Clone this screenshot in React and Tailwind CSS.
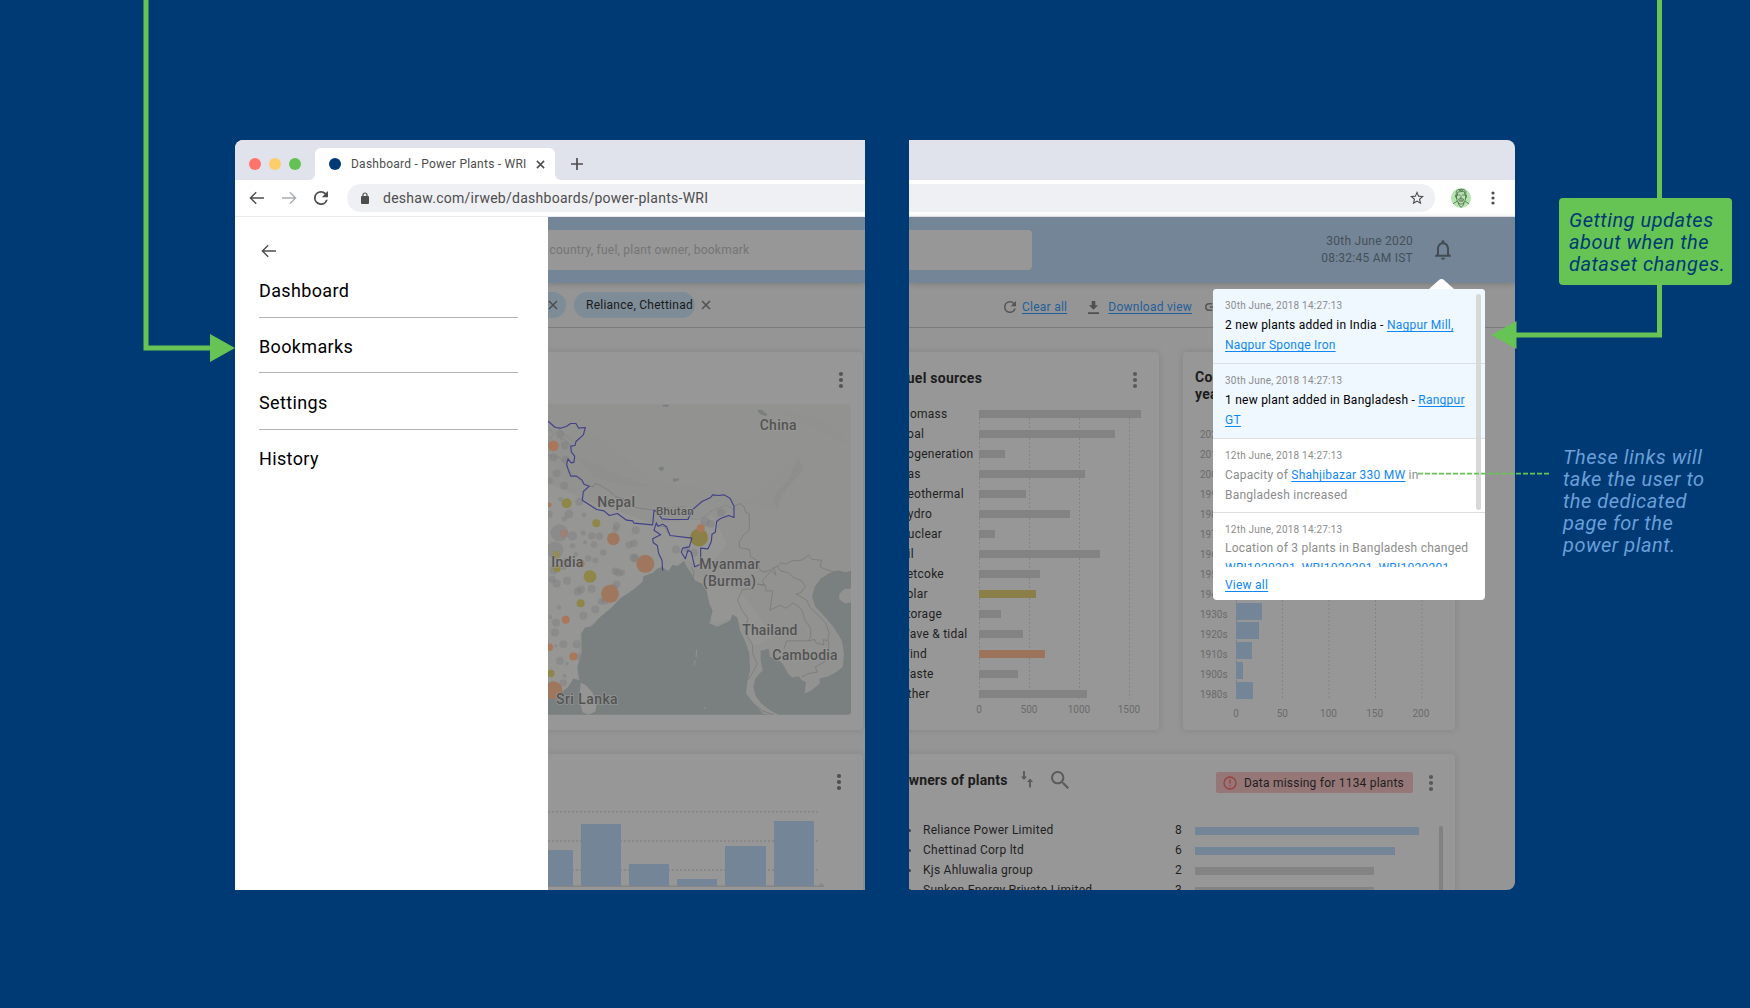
import React from "react";

const FUELS = [
  ["Biomass", 162, "bg-[#838383]"],
  ["Coal", 136, "bg-[#838383]"],
  ["Cogeneration", 26, "bg-[#838383]"],
  ["Gas", 106, "bg-[#838383]"],
  ["Geothermal", 47, "bg-[#838383]"],
  ["Hydro", 91, "bg-[#838383]"],
  ["Nuclear", 16, "bg-[#838383]"],
  ["Oil", 121, "bg-[#838383]"],
  ["Petcoke", 61, "bg-[#838383]"],
  ["Solar", 57, "bg-[#8a7f48]"],
  ["Storage", 22, "bg-[#838383]"],
  ["Wave & tidal", 44, "bg-[#838383]"],
  ["Wind", 66, "bg-[#9b745b]"],
  ["Waste", 39, "bg-[#838383]"],
  ["Other", 108, "bg-[#838383]"],
];

const DECADES = [
  ["2020s", 60], ["2010s", 150], ["2000s", 180], ["1990s", 120], ["1980s", 140],
  ["1970s", 100], ["1960s", 90], ["1950s", 70], ["1940s", 41], ["1930s", 26],
  ["1920s", 23], ["1910s", 16], ["1900s", 7], ["1980s", 17],
];

const OWNERS = [
  ["Reliance Power Limited", 8, 224, "bg-[#738596]"],
  ["Chettinad Corp ltd", 6, 200, "bg-[#738596]"],
  ["Kjs Ahluwalia group", 2, 179, "bg-[#838383]"],
  ["Sunkon Energy Private Limited", 3, 179, "bg-[#838383]"],
];

const CARD = "rounded bg-[#979797] shadow-[0_0_7px_rgba(0,0,0,0.12)]";

function Dots({ className = "", small = false }) {
  const r = small ? 1.6 : 2.1;
  const s = small ? 5 : 6;
  return (
    <svg className={className} width="6" height="18" viewBox="0 0 6 18" fill="currentColor">
      <circle cx="3" cy={9 - s} r={r} />
      <circle cx="3" cy="9" r={r} />
      <circle cx="3" cy={9 + s} r={r} />
    </svg>
  );
}

function Arrow({ flip = false, className = "" }) {
  return (
    <svg className={className} width="16" height="16" viewBox="0 0 16 16" fill="none" stroke="currentColor" strokeWidth="1.4">
      <path d={flip ? "M1 8H14.3M8.8 2.2L14.6 8L8.8 13.8" : "M15 8H1.7M7.2 2.2L1.4 8L7.2 13.8"} />
    </svg>
  );
}

function Cross({ size = 10, w = 1.5, className = "" }) {
  return (
    <svg className={className} width={size} height={size} viewBox="0 0 10 10" stroke="currentColor" strokeWidth={w}>
      <path d="M1 1L9 9M9 1L1 9" />
    </svg>
  );
}

function Reload({ size, className = "" }) {
  return (
    <svg className={className} width={size} height={size} viewBox="4 4 16 16" fill="currentColor">
      <path d="M17.65 6.35A7.96 7.96 0 0 0 12 4a8 8 0 1 0 7.73 10h-2.08A6 6 0 1 1 12 6c1.66 0 3.14.69 4.22 1.78L13 11h7V4z" />
    </svg>
  );
}

function TabStrip() {
  return (
    <div className="flex h-10 shrink-0 bg-white">
      <div className="flex w-20 items-center gap-2 rounded-tl-lg rounded-br-md bg-[#e0e3eb] pt-2 pl-[14px]">
        <span className="size-3 rounded-full bg-[#ff736a]" />
        <span className="size-3 rounded-full bg-[#fecd6b]" />
        <span className="size-3 rounded-full bg-[#64c254]" />
      </div>
      <div className="w-60 bg-[#e0e3eb] pt-2">
        <div className="flex h-8 items-center rounded-t-md bg-white pl-[14px] text-[#4d4d4d]">
          <span className="size-3 rounded-full bg-[#003a75]" />
          <span className="ml-[10px] w-[180px] text-xs tracking-[0.24px] whitespace-nowrap">Dashboard - Power Plants - WRI</span>
          <Cross size={9} w={1.7} className="ml-[5px]" />
        </div>
      </div>
      <div className="flex flex-1 items-center rounded-bl-md bg-[#e0e3eb] pt-2 pl-4 text-[#4d4d4d]">
        <svg width="12" height="12" viewBox="0 0 12 12" stroke="currentColor" strokeWidth="1.7">
          <path d="M6 0V12M0 6H12" />
        </svg>
      </div>
    </div>
  );
}

function Drawer() {
  return (
    <nav className="w-[313px] shrink-0 bg-white pl-6 text-black">
      <Arrow className="mt-[26px] ml-[2px] text-[#4d4d4d]" />
      <ul className="mt-[18px] w-[259px] text-lg leading-[28px] tracking-[0.36px]">
        <li className="h-[41px] border-b border-[#b2b2b2]">Dashboard</li>
        <li className="mt-[15px] h-10 border-b border-[#b2b2b2]">Bookmarks</li>
        <li className="mt-4 h-[41px] border-b border-[#b2b2b2]">Settings</li>
        <li className="mt-[15px] h-10">History</li>
      </ul>
    </nav>
  );
}

const GREY_DOTS = [
  [60,192,12],[75,225,12],[40,262,12],[76,268,11],[50,309,12],[73,347,12],[28,332,10],[118,395,12],[62,387,7],[87,432,13],[73,446,8],[132,434,7],[28,432,10],
  [58,488,26],[45,540,25],[97,497,14],[130,488,8],[155,497,11],[178,498,11],[162,523,10],[98,527,8],[230,467,11],[226,478,9],[287,480,12],[282,519,11],[268,524,11],[108,552,7],[145,565,10],[166,570,9],[190,547,10],
  [40,601,12],[70,588,11],[226,603,11],[235,607,12],[37,628,11],[50,640,12],[81,632,12],[123,658,12],[113,664,12],[155,656,12],[220,652,11],[230,643,11],[246,608,9],[285,564,12],[281,563,13],[195,690,13],[183,694,10],[166,718,12],[57,712,7],[130,737,12],[48,758,12],[31,741,6],[45,787,12],[70,822,12],[47,827,5],[110,822,12],[60,872,12],[81,880,5],[116,859,10],[73,917,6],[70,938,11],[80,575,12],[135,516,6],
  [543,427,12],[495,455,14],[512,461,12],[408,538,12],[462,548,12],[440,538,9],
];
const COLOR_DOTS = [
  [40,227,16,"#a9775a"],[28,404,7,"#a9775a"],[72,489,12,"#9c8175"],[220,506,19,"#9f775f"],[122,580,12,"#a9775a"],[316,581,27,"#9f775f"],[210,671,27,"#9f775f"],[77,749,12,"#a9775a"],[28,831,11,"#a9775a"],[100,859,12,"#a9775a"],[40,960,27,"#9f775f"],
  [80,399,15,"#8f8747"],[169,459,12,"#8f8747"],[48,554,12,"#928b5c"],[51,595,11,"#8f8747"],[150,619,19,"#8f8747"],[122,699,12,"#8f8747"],[33,910,11,"#8f8747"],[477,502,27,"#8b8147"],[482,474,12,"#a9775a"],
];
const MAP_LABELS = [
  ["China", 659, 181, 111, 42], ["Nepal", 172, 412, 113, 42], ["Bhutan", 348, 435, 113, 35], ["India", 34, 592, 96, 42],
  ["Myanmar", 478, 598, 182, 42], ["(Burma)", 488, 647, 160, 42], ["Thailand", 607, 794, 165, 42], ["Cambodia", 697, 869, 196, 42], ["Sri Lanka", 48, 1002, 185, 42],
];

function PlantMap() {
  return (
    <svg className="block h-[311px] w-[303px] rounded-r" viewBox="24 102 909 932">
      <rect x="24" y="102" width="909" height="932" fill="#929291" />
      <g fill="#8d8d8c">
        <path d="M24 220L130 170L240 250L330 330L520 360L620 400L700 330L770 250L790 300L740 360L700 420L600 390L450 400L330 410L220 370L120 330L70 320Z" opacity=".3" />
        <path d="M775 262L790 300L760 330L725 370L712 420L700 380L745 330Z" opacity=".8" />
        <path d="M110 260L230 310L330 350L270 350L160 320Z" opacity=".5" />
        <path d="M715 120L850 150L930 220L900 210L800 160Z" opacity=".3" />
      </g>
      <g fill="#989896">
        <path d="M24 340L140 390L340 460L520 440L560 520L500 600L440 570L380 600L300 640L180 740L120 790L110 940L24 990Z" opacity=".7" />
        <path d="M470 620L600 660L700 800L640 830L590 740L520 760Z" opacity=".5" />
      </g>
      <path fill="#7a8080" d="M24 1034V985L60 970L85 950L100 925L118 930L112 890L125 850L124 790L135 772L155 768L170 752L183 738L215 712L240 685L285 655L308 635L310 618L338 608L352 596L366 590L385 603L398 584L412 588L432 572L441 592L452 606L466 632L486 640L500 662L508 700L518 722L508 760L532 770L552 760L570 752L578 732L592 742L600 780L616 815L628 850L630 900L622 935L618 970L634 990L652 1010L668 1030L690 1034Z" />
      <path fill="#959594" d="M122 938L138 945L158 968L170 1000L166 1024L146 1034L128 1026L118 990Z" />
      <path fill="#7a8080" d="M662 842L686 836L690 860L712 868L728 880L744 910L756 922L776 918L786 930L798 936L794 970L812 962L840 940L838 925L866 918L890 905L908 890L912 850L905 810L880 770L850 735L826 710L816 680L824 650L842 625L866 610L894 600L916 606L933 602V1034H715L690 1020L664 1000L648 980L640 950L646 925L668 900L662 870Z" />
      <path fill="#929291" d="M897 672L914 656L933 656V696L916 700L898 688Z" />
      <path fill="#7a8080" d="M652 120L664 118L682 132L678 138L660 132ZM366 104H388L384 110L370 110ZM354 294L366 288L374 296L364 304ZM398 326L418 324L414 332L400 335Z" />
      <path stroke="#929291" strokeWidth="3" fill="none" d="M470 838L468 862M465 870L463 884M493 1010L496 1016" />
      <g fill="none" stroke="#757574" strokeWidth="2">
        <path strokeDasharray="4 4" d="M24 172L42 190L30 205M95 230L75 208L58 205M24 255L60 262L85 300L120 330M50 170L70 190L100 215M365 415L440 408M455 447L480 448L520 420L560 405L583 420" />
        <path d="M148 348L160 350L165 340L180 345L205 360L225 378L260 390L285 412L305 415L340 420M345 465L375 470L385 490" />
        <path d="M583 408L600 400L612 410L618 428L628 430V480L610 495L598 515V532L628 538L632 560L650 570L660 600L672 606L690 600L712 588L722 578L738 582L755 572L785 570L806 555L816 568L845 570L840 590L858 598L885 606" />
        <path d="M712 588L722 602L745 608L760 622L785 632L796 650L782 668L768 672L800 690L810 712L835 735L858 760L868 790L862 812L850 808L852 824L828 818L824 808L806 812L740 812L732 836M700 590L708 615L695 602L668 630L672 645L652 642L676 645L678 662H698L690 720L720 705L738 714L760 698L785 718L795 750L812 775V800L806 812M642 656L608 658L592 690L606 720L624 745L615 785L638 825V850L652 882L624 930M866 812V866L845 880L826 890L832 906L806 910L785 920" />
        <path d="M455 590L462 610L456 632M700 1034L668 1022L652 1008" />
      </g>
      <g>{GREY_DOTS.map(([x, y, r], i) => <circle key={i} cx={x} cy={y} r={r} fill="#808081" fillOpacity=".5" />)}</g>
      <g>{COLOR_DOTS.map(([x, y, r, c], i) => <circle key={i} cx={x} cy={y} r={r} fill={c} />)}</g>
      <path fill="none" stroke="#41418a" strokeWidth="3.4" strokeLinejoin="round" d="M24 153L46 172L62 174L80 168L92 160H108L116 174L136 172L130 194L108 214L105 226L92 228L94 245L104 258L102 276L94 278L84 266L80 282L84 296L92 318H110L126 330L132 342L148 348L130 364L127 390L170 418L192 422L208 436L232 430L260 450L278 452L282 459L338 464L342 420L350 424L366 446L390 448H444L456 420L486 394L512 382L518 374L536 376L552 374L570 384L582 408V442L566 436L540 446L530 454L526 486L516 492L514 514L504 536L482 534V582L464 590L454 546L444 540L436 566L424 546L428 534L448 530L456 504L390 496L380 470L368 462L354 468L349 458L342 480L362 494L338 506L340 518L352 526L356 550L366 570L368 602" />
      <g fontFamily="Roboto" fontWeight="500" fill="#535353" stroke="#9a9a99" strokeWidth="5" strokeOpacity=".75" paintOrder="stroke">
        {MAP_LABELS.map(([t, x, y, w, s]) => (
          <text key={t} x={x} y={y} textLength={w} fontSize={s}>{t}</text>
        ))}
      </g>
    </svg>
  );
}

function LeftColumn() {
  const bars = [["w-[25px]", "h-9"], ["w-10", "h-[62px]"], ["w-10", "h-[22px]"], ["w-10", "h-[7px]"], ["w-[41px]", "h-10"], ["w-10", "h-[65px]"]];
  return (
    <div className="flex w-[317px] flex-col overflow-hidden bg-[#959595]">
      <div className="flex h-[66px] shrink-0 items-center bg-[#738596] shadow-[0_1px_6px_rgba(0,0,0,0.18)]">
        <div className="flex h-10 w-full items-center bg-[#979797] text-xs tracking-[0.24px] whitespace-nowrap text-[#757575]">
          <span className="pl-[1.5px]">country, fuel, plant owner, bookmark</span>
        </div>
      </div>
      <div className="flex h-[45px] shrink-0 items-center border-b border-[#7b7b7b] text-xs">
        <div className="flex h-[26px] w-[18px] items-center rounded-r-full bg-[#7d8c97] text-[#4d4d4d]"><Cross /></div>
        <div className="ml-2 flex h-[26px] w-[121px] items-center rounded-full bg-[#7d8c97] pl-3 tracking-[0.25px] whitespace-nowrap text-[#1a1a1a]">Reliance, Chettinad</div>
        <Cross className="ml-[6px] text-[#505050]" />
      </div>
      <div className={`mt-6 mr-[2px] h-[378px] shrink-0 rounded-l-none ${CARD}`}>
        <div className="flex h-[52px] justify-end pt-[19px] pr-[19px] text-[#555]"><Dots /></div>
        <PlantMap />
      </div>
      <div className={`mt-6 mr-[2px] h-[160px] shrink-0 rounded-l-none ${CARD}`}>
        <div className="flex h-[57px] justify-end pt-[19px] pr-[21px] text-[#4f4f4f]"><Dots /></div>
        <div className="relative h-[76px] w-[277px]">
          <svg className="absolute inset-0" width="277" height="76" fill="none" stroke="#858585" strokeWidth="1.5">
            <path strokeDasharray="2 2" d="M0 .8H272M0 30H272M0 59H272" />
            <path d="M0 75.3H273" strokeWidth="1.5" />
            <path d="M272 72L277 75L272 78" fill="#858585" stroke="none" />
          </svg>
          <div className="relative flex h-[75px] items-end gap-2">
            {bars.map(([w, h], i) => <div key={i} className={`bg-[#738596] ${w} ${h}`} />)}
          </div>
        </div>
      </div>
    </div>
  );
}

function LeftWindow() {
  return (
    <section className="flex w-[630px] flex-col overflow-hidden rounded-tl-lg">
      <TabStrip />
      <div className="flex h-[37px] shrink-0 items-center border-b border-[#e9eaed] bg-white pl-[14px] text-[#4d4d4d]">
        <Arrow />
        <Arrow flip className="ml-4 text-[#aaadb5]" />
        <Reload size={14} className="ml-[17px]" />
        <div className="ml-[19px] flex h-7 flex-1 items-center rounded-l-full bg-[#eff0f4] pl-[14px]">
          <svg width="8" height="12" viewBox="0 0 8 12"><rect y="4" width="8" height="8" rx="1" fill="currentColor" /><path d="M2 5V3a2 2 0 0 1 4 0V5" fill="none" stroke="currentColor" strokeWidth="1.2" /></svg>
          <span className="ml-[14px] text-sm tracking-[0.27px]">deshaw.com/irweb/dashboards/power-plants-WRI</span>
        </div>
      </div>
      <div className="flex min-h-0 flex-1 overflow-hidden">
        <Drawer />
        <LeftColumn />
      </div>
    </section>
  );
}

function Avatar() {
  return (
    <svg className="ml-4" width="20" height="20" viewBox="0 0 20 20" fill="none" stroke="#3f5a3f" strokeWidth=".7">
      <circle cx="10" cy="10" r="10" fill="#b4e3ad" stroke="none" />
      <path d="M5.3 8V4.5C5 2.5 7 1.2 10 1.4C13 1 15.3 2.5 14.8 5V8.5L14 13L11.5 16H8.7L6.2 13ZM6.3 8L6.8 4.2L9 3.6H13.4L14 8M7.4 7H9.2M11 7H13M10 7.5V10H9.4M7.6 11.2L9.8 10.4L12.6 11.2L12 13.2H8.4ZM9 12H11.4M6.3 13.3L3 15L2 16M13.8 13.3L17 15L18 16.2M7 14L8 17L10 19.4L12.3 17L13.2 14.4M8 2.4L12.2 2.2M5.3 8.2L4.8 7V9.6L6 10.4M14.8 8L15.3 7.3V9.6L14.3 10.4" />
    </svg>
  );
}

function FuelCard() {
  return (
    <div className={`-ml-[22px] h-[378px] w-[272px] shrink-0 pl-3 ${CARD}`}>
      <div className="flex h-[52px] items-center justify-between pr-[21px]">
        <h2 className="text-sm font-bold tracking-[0.25px] text-[#1c1c1c]">Fuel sources</h2>
        <Dots className="mt-1 text-[#5a5a5a]" />
      </div>
      <div className="relative h-[300px]">
        <svg className="absolute top-[6px] left-[80px]" width="151" height="289" stroke="#848484" strokeDasharray="2 2">
          <path d="M.5 0V289M50.5 0V289M100.5 0V289M150.5 0V289" />
        </svg>
        <ul className="relative text-xs tracking-[0.25px] text-[#1f1f1f]">
          {FUELS.map(([n, w, c]) => (
            <li key={n} className="flex h-5 items-center">
              <span className="w-20 whitespace-nowrap">{n}</span>
              <span className={`h-2 ${c}`} style={{ width: w }} />
            </li>
          ))}
        </ul>
      </div>
      <div className="-mt-[1px] ml-[55px] flex text-center text-[10px] leading-[14px] text-[#6b6b6b]">
        {["0", "500", "1000", "1500"].map((n) => <span key={n} className="w-[50px]">{n}</span>)}
      </div>
    </div>
  );
}

function YearCard() {
  return (
    <div className={`h-[378px] w-[272px] shrink-0 pl-3 ${CARD}`}>
      <h2 className="h-[72px] pt-[17px] text-sm leading-[17px] font-bold tracking-[0.25px] text-[#1c1c1c]">Commissioning<br />year</h2>
      <div className="relative flex h-[280px] text-[10px] text-[#6b6b6b]">
        <ul className="w-[41px] pl-[5px]">
          {DECADES.map(([n], i) => <li key={i} className="flex h-5 items-center">{n}</li>)}
        </ul>
        <div className="relative">
          <svg className="absolute top-0 left-0" width="188" height="276" stroke="#848484" strokeDasharray="2 2">
            <path d="M.5 0V276M46.5 0V276M93 0V276M139.5 0V276M186 0V276" />
          </svg>
          <ul className="relative flex h-[275px] flex-col justify-between">
            {DECADES.map(([, w], i) => <li key={i} className="h-[17px] bg-[#738596]" style={{ width: w }} />)}
          </ul>
        </div>
      </div>
      <div className="ml-[18px] flex pt-[3px] text-center text-[10px] leading-[14px] text-[#6b6b6b]">
        {["0", "50", "100", "150", "200"].map((n) => <span key={n} className="w-[46.2px]">{n}</span>)}
      </div>
    </div>
  );
}

function OwnersCard() {
  return (
    <div className={`mt-6 -ml-[22px] h-[170px] w-[568px] shrink-0 pl-3 ${CARD}`}>
      <div className="flex h-[57px] items-center">
        <h2 className="-mt-[6px] w-[122px] shrink-0 text-sm font-bold tracking-[0.13px] whitespace-nowrap text-[#1c1c1c]">Owners of plants</h2>
        <svg className="-mt-[6px] shrink-0" width="12" height="17" viewBox="0 0 12 17" fill="#595959">
          <path d="M2.100 0H3.900V5.500H6L3 9L0 5.500H2.100ZM8.100 16.500H9.900V11H12L9 7.500L6 11H8.100Z" />
        </svg>
        <svg className="-mt-[5px] ml-[18px] shrink-0" width="18" height="18" viewBox="3 3 17.5 17.5" fill="#5a5a5a">
          <path d="M15.5 14h-.79l-.28-.27A6.47 6.47 0 0 0 16 9.5 6.5 6.5 0 1 0 9.5 16c1.61 0 3.09-.59 4.23-1.57l.27.28v.79l5 4.99L20.49 19l-4.99-5zm-6 0C7.01 14 5 11.99 5 9.5S7.01 5 9.5 5 14 7.01 14 9.5 11.99 14 9.5 14z" />
        </svg>
        <div className="ml-[147px] flex h-[21px] w-[197px] shrink-0 items-center rounded-xs bg-[#967777] pl-[7px] text-xs tracking-[0.22px] whitespace-nowrap text-[#1f1f1f]">
          <svg width="14" height="14" viewBox="0 0 14 14" fill="none" stroke="#9a3f3f" strokeWidth="1.3"><circle cx="7" cy="7" r="6" /><path d="M7 3.5V7.8M7 9.2V10.6" /></svg>
          <span className="ml-[7px]">Data missing for 1134 plants</span>
        </div>
        <Dots className="ml-[15px] shrink-0 text-[#595959]" />
      </div>
      <div className="flex pt-[9px]">
        <ul className="w-[540px] text-xs tracking-[0.25px] text-[#1f1f1f]">
          {OWNERS.map(([n, c, w, col]) => (
            <li key={n} className="flex h-5 items-center">
              <span className="w-6 pl-[9px]"><i className="block size-[3px] rounded-full bg-[#444]" /></span>
              <span className="w-[252px] whitespace-nowrap">{n}</span>
              <span className="w-5">{c}</span>
              <span className={`mt-[2px] h-2 ${col}`} style={{ width: w }} />
            </li>
          ))}
        </ul>
        <div className="mt-[6px] h-20 w-1 rounded-full bg-[#818181]" />
      </div>
    </div>
  );
}

function Notice({ date, children, className = "", bodyClass = "pt-[2px]" }) {
  return (
    <li className={`border-b border-[#dcdfe2] pl-3 ${className}`}>
      <time className="block pt-[9px] text-[10px] leading-[15px] tracking-[0.21px] text-[#8c8c8c]">{date}</time>
      <p className={`w-[250px] text-xs leading-5 tracking-[0.24px] ${bodyClass}`}>{children}</p>
    </li>
  );
}

function Link({ children }) {
  return <a className="text-[#0f87f5] underline decoration-1 underline-offset-2 [text-decoration-skip-ink:none]">{children}</a>;
}

function Notifications() {
  return (
    <div className="absolute top-[72px] left-[304px] h-[311px] w-[272px] rounded bg-white">
      <svg className="absolute -top-[10px] left-[216px]" width="25" height="10" viewBox="0 0 25 10" fill="#fff">
        <path d="M0 10L9.5 1.5Q12.5 -1.3 15.5 1.5L25 10Z" />
      </svg>
      <ul className="h-[278px] overflow-hidden rounded-t text-black">
        <Notice date="30th June, 2018 14:27:13" className="h-[75px] bg-[#eff7ff]">
          2 new plants added in India - <Link>Nagpur Mill,</Link><br /><Link>Nagpur Sponge Iron</Link>
        </Notice>
        <Notice date="30th June, 2018 14:27:13" className="h-[75px] bg-[#eff7ff]">
          1 new plant added in Bangladesh - <Link>Rangpur</Link><br /><Link>GT</Link>
        </Notice>
        <Notice date="12th June, 2018 14:27:13" className="h-[74px] text-[#8c8c8c]">
          Capacity of <Link>Shahjibazar 330 MW</Link> in<br />Bangladesh increased
        </Notice>
        <Notice date="12th June, 2018 14:27:13" className="h-[75px] text-[#8c8c8c]" bodyClass="pt-[1px]">
          Location of 3 plants in Bangladesh changed<br /><Link>WRI1020201, WRI1020201, WRI1020201</Link>
        </Notice>
      </ul>
      <p className="pt-2 pl-3 text-xs leading-5 tracking-[0.23px]"><Link>View all</Link></p>
      <div className="absolute top-[5px] right-1 h-[216px] w-[5px] rounded-full bg-[#d8d8d8]" />
    </div>
  );
}

function RightWindow() {
  return (
    <section className="flex w-[606px] flex-col overflow-hidden rounded-r-lg">
      <div className="h-10 shrink-0 bg-[#e0e3eb]" />
      <div className="flex h-[37px] shrink-0 items-center border-b border-[#e9eaed] bg-white text-[#4d4d4d]">
        <div className="flex h-7 w-[526px] items-center justify-end rounded-r-full bg-[#eff0f4] pr-[11px]">
          <svg width="14" height="14" viewBox="2 2 20 20" fill="currentColor">
            <path d="M22 9.24l-7.19-.62L12 2 9.19 8.63 2 9.24l5.46 4.73L5.82 21 12 17.27 18.18 21l-1.63-7.03L22 9.24zM12 15.4l-3.76 2.27 1-4.28-3.32-2.88 4.38-.38L12 6.1l1.71 4.04 4.38.38-3.32 2.88 1 4.28L12 15.4z" />
          </svg>
        </div>
        <Avatar />
        <Dots small className="ml-[19px]" />
      </div>
      <div className="relative flex min-h-0 flex-1 flex-col bg-[#959595]">
        <header className="flex h-[66px] shrink-0 items-center bg-[#738596] shadow-[0_1px_6px_rgba(0,0,0,0.18)]">
          <div className="h-10 w-[123px] rounded-r bg-[#979797]" />
          <p className="w-[381px] text-right text-xs leading-[17px] tracking-[0.25px] text-[#46505a]">30th June 2020<br />08:32:45 AM IST</p>
          <svg className="ml-[22px]" width="16" height="20" viewBox="4 2.5 16 19.5" fill="#434c55">
            <path d="M12 22c1.1 0 2-.9 2-2h-4c0 1.1.9 2 2 2zm6-6v-5c0-3.07-1.63-5.64-4.5-6.32V4c0-.83-.67-1.5-1.5-1.5s-1.5.67-1.5 1.5v.68C7.64 5.36 6 7.92 6 11v5l-2 2v1h16v-1l-2-2zm-2 1H8v-6c0-2.48 1.51-4.5 4-4.5s4 2.02 4 4.5v6z" />
          </svg>
        </header>
        <div className="flex h-[45px] shrink-0 items-center border-b border-[#7b7b7b] pl-[95px] text-xs tracking-[0.25px] text-[#1f5f9a]">
          <Reload size={12} className="mt-1 text-[#555]" />
          <span className="mt-[3px] ml-[6px] underline decoration-1 underline-offset-2">Clear all</span>
          <svg className="mt-1 ml-[21px] text-[#505050]" width="11" height="13" viewBox="0 0 11 13" fill="currentColor"><path d="M3.7 0H7.3V4.2H10L5.5 8.8L1 4.2H3.7ZM0 11.3H11V13H0Z" /></svg>
          <span className="mt-[3px] ml-[9px] underline decoration-1 underline-offset-2">Download view</span>
          <svg className="mt-1 ml-[13px] text-[#555]" width="16" height="8" viewBox="2 7 20 10" fill="currentColor"><path d="M3.9 12c0-1.71 1.39-3.1 3.1-3.1h4V7H7a5 5 0 0 0 0 10h4v-1.900H7A3.100 3.100 0 0 1 3.900 12zM8 13h8v-2H8v2zm9-6h-4v1.900h4a3.100 3.100 0 0 1 0 6.200h-4V17h4a5 5 0 0 0 0-10z" /></svg>
        </div>
        <div className="min-h-0 flex-1 overflow-hidden">
          <div className="flex gap-6 pt-6">
            <FuelCard />
            <YearCard />
          </div>
          <OwnersCard />
        </div>
        <Notifications />
      </div>
    </section>
  );
}

export default function App() {
  return (
    <main className="relative h-[1008px] w-[1750px] overflow-hidden bg-[#003a75] pt-[140px] pl-[235px] font-['Roboto',sans-serif]">
      <div className="flex h-[750px] gap-[44px]">
        <LeftWindow />
        <RightWindow />
      </div>
      <svg className="absolute inset-0" width="1750" height="1008" fill="none" stroke="#66c454" strokeWidth="5">
        <path d="M146 0V348H212M1659.500 0V335H1514" />
        <path d="M210 334L235 348L210 362ZM1516.500 321L1491.500 335L1516.500 349Z" fill="#66c454" stroke="none" />
        <path d="M1418 473.700H1550" strokeWidth="1.800" strokeDasharray="5 2" />
      </svg>
      <p className="absolute top-[198px] left-[1559px] h-[87px] w-[173px] rounded bg-[#66c454] pt-[11px] pl-[10px] text-xl leading-[22px] tracking-[0.5px] whitespace-nowrap text-[#003a75] italic">
        Getting updates<br />about when the<br />dataset changes.
      </p>
      <p className="absolute top-[446px] left-[1563px] text-xl leading-[22px] tracking-[0.5px] whitespace-nowrap text-[#6a9fd8] italic">
        These links will<br />take the user to<br />the dedicated<br />page for the<br />power plant.
      </p>
    </main>
  );
}
